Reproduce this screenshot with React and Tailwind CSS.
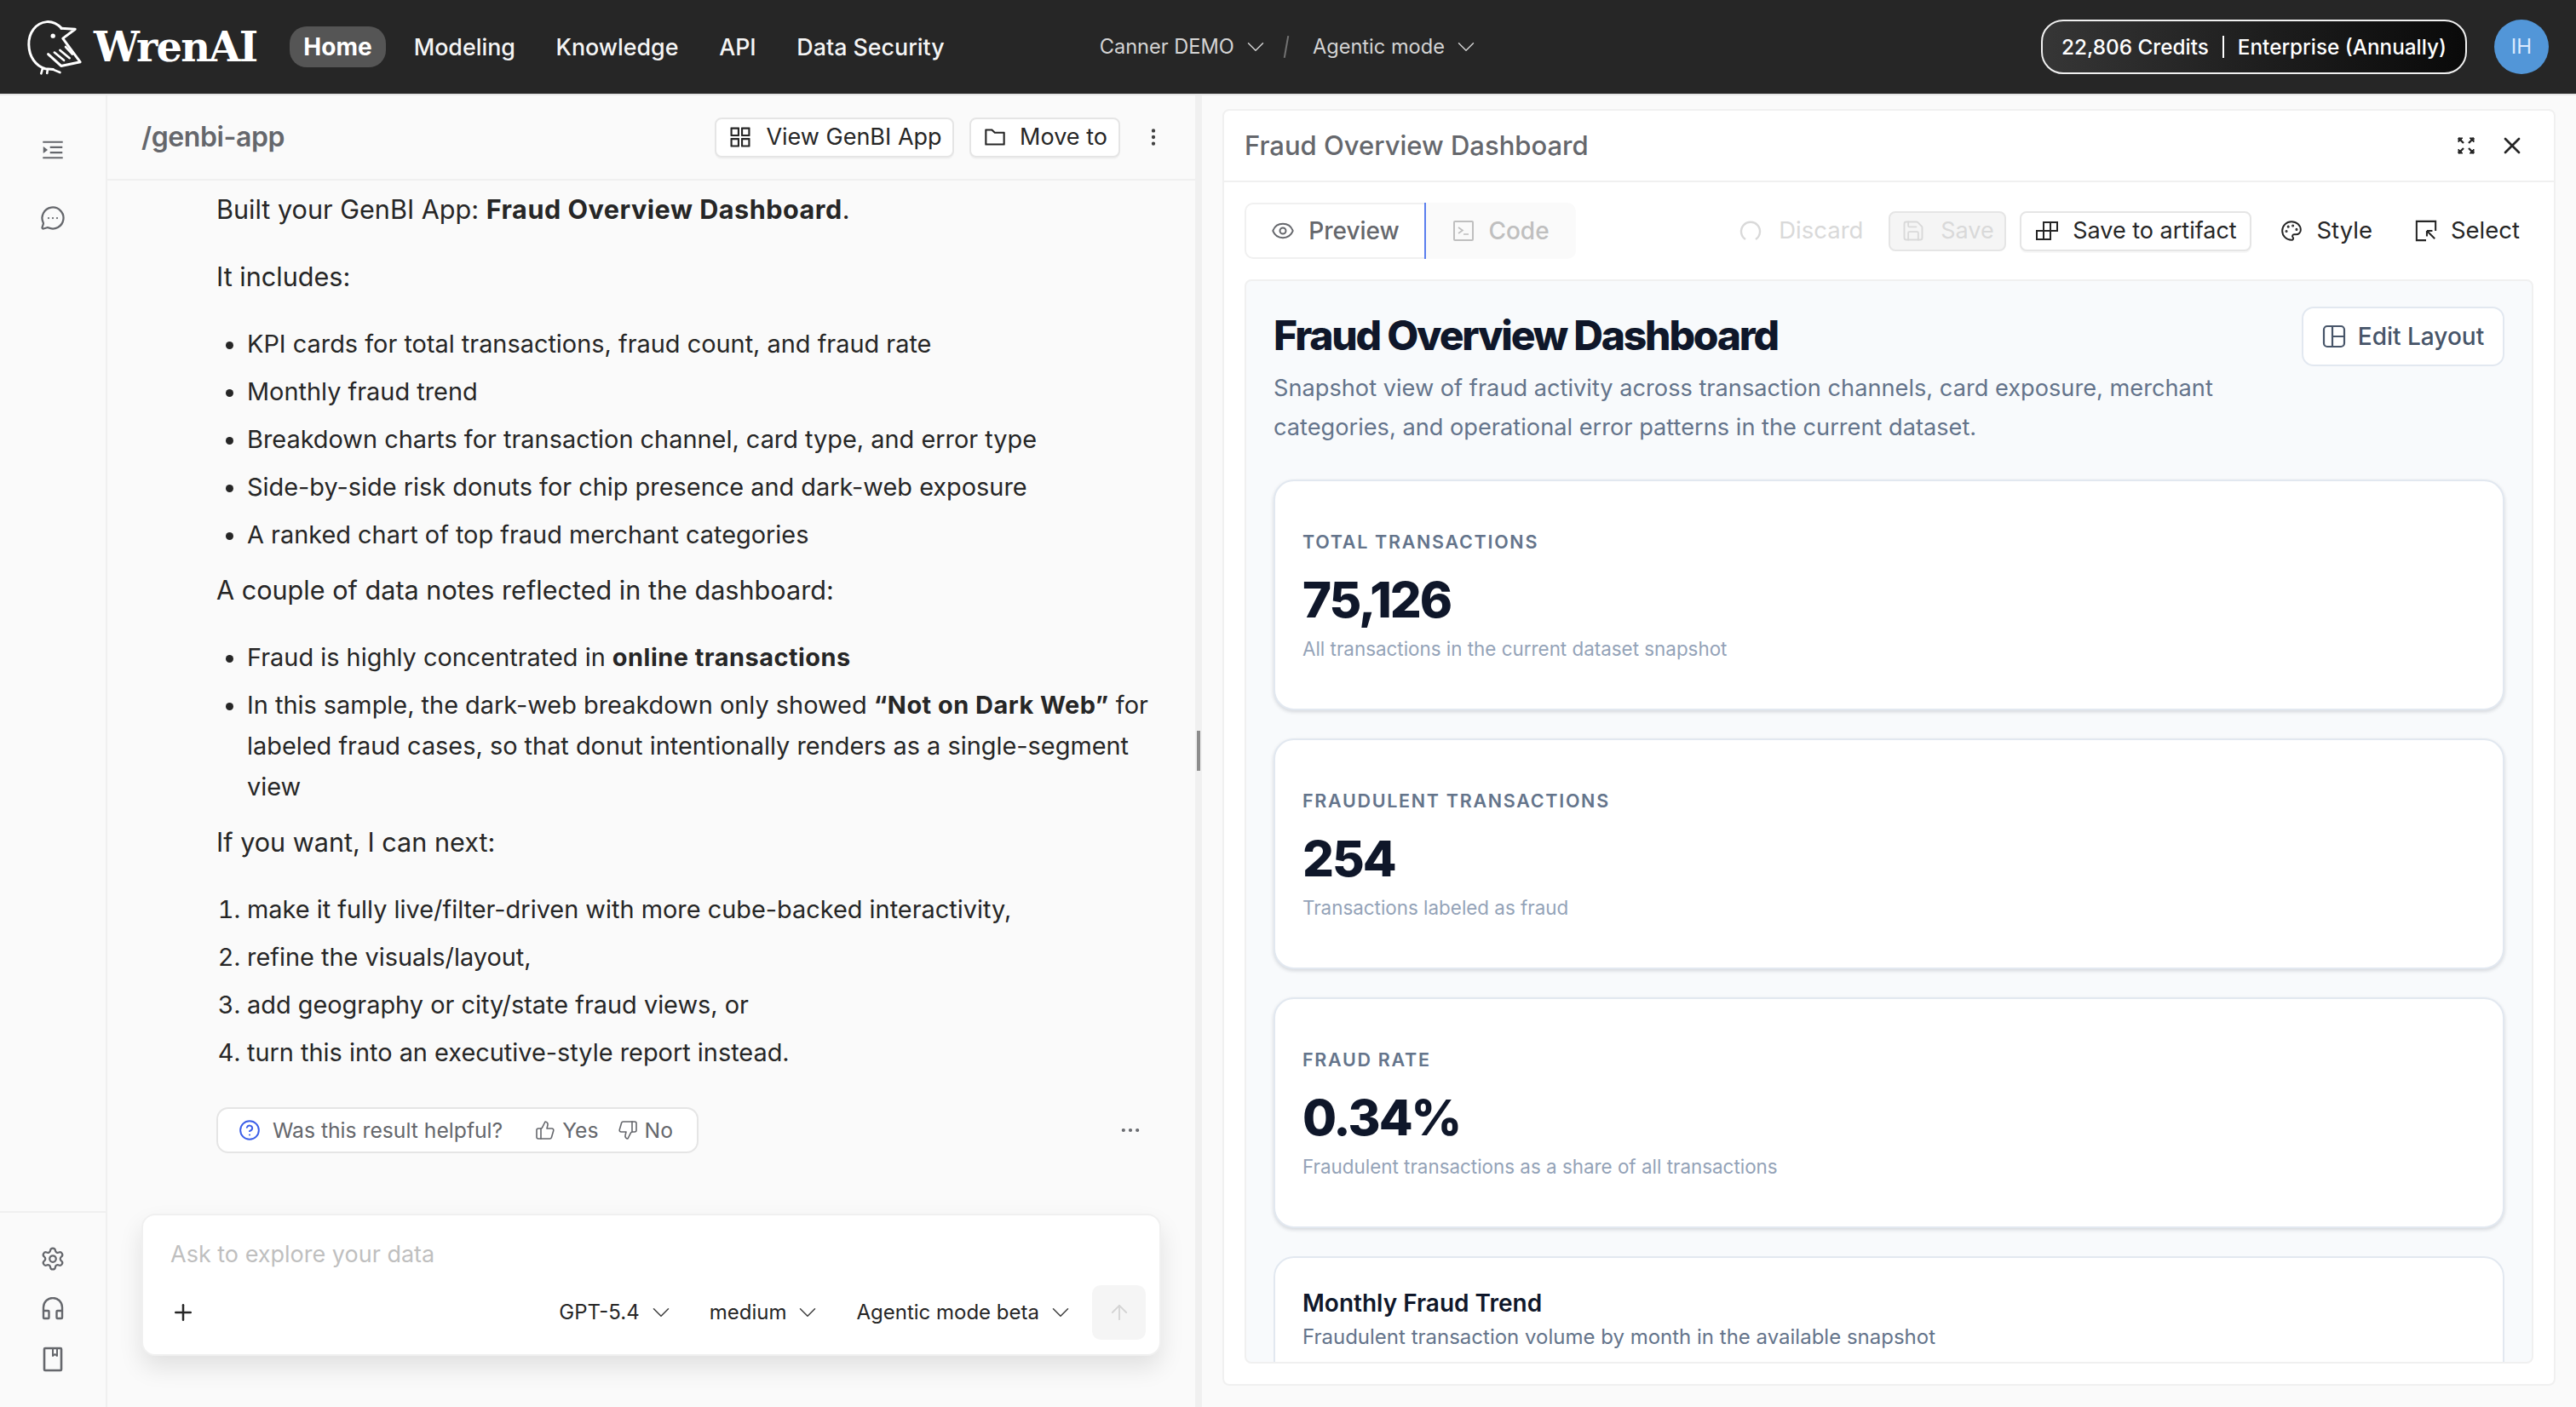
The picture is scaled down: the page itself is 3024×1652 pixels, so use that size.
import React from "react";
import { ChevronDown, MessageCircleMore, Settings, Eye, X, Palette, Plus, ArrowUp, ThumbsUp, ThumbsDown, CircleHelp, MoreHorizontal, MoreVertical, Save } from "lucide-react";
import { AiOutlineAppstore, AiOutlineFolder, AiOutlineMenuUnfold } from "react-icons/ai";

const Logo = () => (
  <svg viewBox="90 60 205 200" className="w-[68px] h-[66px] shrink-0" fill="none" stroke="#fff" strokeWidth="9" strokeLinecap="round" strokeLinejoin="round">
    <path d="M218 94 C200 76 180 70 165 71 C125 74 100 112 101 152 C102 195 125 228 160 238 L188 240" />
    <path d="M216 94 L266 97 L222 130 L284 214 L216 228 L170 186" />
    <path d="M192 180 L226 208 M212 172 L246 200 M232 160 L256 186" strokeWidth="8" />
    <path d="M150 238 L145 255 M168 240 L166 254 M185 240 L212 251" strokeWidth="8" />
    <circle cx="187" cy="121" r="8" fill="#fff" stroke="none" />
  </svg>
);
const Headset = ({ className }) => (
  <svg viewBox="0 0 26 28" className={className} fill="none" stroke="currentColor" strokeWidth="2.4" strokeLinejoin="round">
    <path d="M2 17 V12 A11 11 0 0 1 24 12 V17" />
    <rect x="2" y="16" width="6.5" height="9" rx="1" />
    <rect x="17.5" y="16" width="6.5" height="9" rx="1" />
  </svg>
);
const Book = ({ className }) => (
  <svg viewBox="0 0 24 30" className={className} fill="none" stroke="currentColor" strokeWidth="2.6" strokeLinejoin="round">
    <rect x="2" y="2" width="20" height="26" rx="1" />
    <path d="M12 2 V11 L14.5 9 L17 11 V2" strokeWidth="2" />
  </svg>
);
const Collapse = ({ className }) => (
  <svg viewBox="0 0 24 24" className={className} fill="none" stroke="currentColor" strokeWidth="2.4">
    <path d="M3 3 L9 9 M21 3 L15 9 M3 21 L9 15 M21 21 L15 15" />
    <path d="M3 3 H8 L3 8 Z M21 3 H16 L21 8 Z M3 21 H8 L3 16 Z M21 21 H16 L21 16 Z" fill="currentColor" strokeWidth="1" />
  </svg>
);
const CodeBox = ({ className }) => (
  <svg viewBox="0 0 26 26" className={className} fill="none" stroke="currentColor" strokeWidth="2">
    <rect x="2" y="2" width="22" height="22" rx="1" />
    <path d="M7 9 L12 12.5 L7 16 M13 17 H19" strokeWidth="1.6" />
  </svg>
);
const Artifact = ({ className }) => (
  <svg viewBox="0 0 28 24" className={className} fill="none" stroke="currentColor" strokeWidth="2">
    <path d="M2 12 H18 V22 H2 Z M10 12 V22 M10 12 V2 H26 V12 H18 V2" />
  </svg>
);
const SelectIcon = ({ className }) => (
  <svg viewBox="0 0 28 28" className={className} fill="none" stroke="currentColor" strokeWidth="2.2">
    <path d="M14 26 H2 V2 H26 V14" />
    <path d="M15 14 L25 24 M15 14 V21 M15 14 H22" />
  </svg>
);
const Spin = ({ className }) => (
  <svg viewBox="0 0 26 26" className={className} fill="none" stroke="currentColor" strokeWidth="2.4">
    <path d="M7 23 A11 11 0 1 1 19 23" />
  </svg>
);
const LayoutIcon = ({ className }) => (
  <svg viewBox="0 0 28 28" className={className} fill="none" stroke="currentColor" strokeWidth="2.2" strokeLinejoin="round">
    <rect x="2" y="2" width="24" height="24" rx="4" />
    <path d="M12 2 V26 M12 14 H26" />
  </svg>
);

const Card = ({ label, value, note }) => (
  <div className="h-[271px] shrink-0 rounded-[24px] border-2 border-[#e2e8f0] bg-white px-[32px] pt-[57px] shadow-[0_2px_4px_rgba(15,23,42,0.15)]">
    <div className="text-[21.5px] leading-[28px] font-semibold tracking-[1.7px] text-[#64748b]">{label}</div>
    <div className="mt-[18px] text-[58px] leading-[72px] font-extrabold tracking-[-2px] text-[#0f172a]">{value}</div>
    <div className="mt-[6px] text-[22.4px] leading-[32px] text-[#94a3b8]">{note}</div>
  </div>
);

const Nav = ({ children }) => <span className="text-[26.8px] font-medium text-[#f5f5f5]">{children}</span>;

const Select = ({ children, className = "" }) => (
  <div className={`flex items-center gap-[8px] text-[24px] text-[#262626] ${className}`}>
    <span>{children}</span>
    <ChevronDown className="w-[34px] h-[34px] -mx-[0px] text-[#404040]" strokeWidth={1.1} />
  </div>
);

export default function App() {
  return (
    <div className="w-[3024px] h-[1652px] overflow-hidden flex flex-col bg-[#fafafa] font-['Inter',sans-serif] text-[#262626]">
      <header className="h-[112px] shrink-0 flex items-center bg-[#262626] border-b-2 border-[#e5e5e5] pl-[30px] pr-[32px]">
        <Logo />
        <span className="ml-[12px] w-[190px] font-['DejaVu_Serif',serif] font-bold text-[48px] tracking-[-1.8px] leading-none text-white">WrenAI</span>
        <div className="ml-[40px] flex items-center gap-[47.7px]">
          <span className="-mr-[15px] h-[48px] w-[113px] flex items-center justify-center rounded-[20px] bg-[#555555] text-[28px] font-bold text-white">Home</span>
          <Nav>Modeling</Nav>
          <Nav>Knowledge</Nav>
          <Nav>API</Nav>
          <Nav>Data Security</Nav>
        </div>
        <div className="ml-[182px] flex items-center text-[23.6px] text-[#d4d4d4]">
          <span>Canner DEMO</span>
          <ChevronDown className="ml-[8px] w-[34px] h-[34px]" strokeWidth={1} />
          <span className="ml-[18px] mr-[30px] h-[26px] w-[2px] rotate-[10deg] bg-[#737373]" />
          <span>Agentic mode</span>
          <ChevronDown className="ml-[8px] w-[34px] h-[34px]" strokeWidth={1} />
        </div>
        <div className="ml-auto flex items-center h-[64px] w-[500px] justify-center gap-[16px] rounded-[26px] border-2 border-[#f0f0f0] bg-gradient-to-r from-[#363636] to-[#0a0a0a] text-[24.3px] font-medium text-white">
          <span>22,806 Credits</span>
          <span className="h-[26px] w-[2px] bg-white" />
          <span>Enterprise (Annually)</span>
        </div>
        <div className="ml-[32px] w-[64px] h-[64px] rounded-full bg-[#5296d8] flex items-center justify-center text-[24px] text-[#dbeafe]">IH</div>
      </header>

      <div className="flex-1 min-h-0 flex">
        <aside className="w-[126px] shrink-0 border-r-2 border-[#f0f0f0] flex flex-col text-[#65676c]">
          <div className="flex-1 flex flex-col items-center pt-[49px] gap-[50px]">
            <AiOutlineMenuUnfold className="w-[30px] h-[30px]" />
            <MessageCircleMore className="w-[30px] h-[30px]" strokeWidth={1.8} />
          </div>
          <div className="h-[230px] shrink-0 border-t-2 border-[#f0f0f0] flex flex-col items-center pt-[39px] gap-[30px]">
            <Settings className="w-[30px] h-[30px]" strokeWidth={1.8} />
            <Headset className="w-[26px] h-[28px]" />
            <Book className="w-[24px] h-[30px]" />
          </div>
        </aside>

        <main className="w-[1277px] shrink-0 flex flex-col relative">
          <div className="h-[100px] shrink-0 border-b-2 border-[#f0f0f0] flex items-center pl-[40px] pr-[36px]">
            <span className="text-[32px] font-semibold text-[#65676c] tracking-[-0.4px]">/genbi-app</span>
            <div className="ml-auto flex items-center gap-[18px]">
              <div className="h-[47px] w-[281px] flex items-center justify-center gap-[14px] rounded-[8px] border-2 border-[#e5e5e5] bg-white text-[27px] shadow-[0_2px_0_rgba(0,0,0,0.03)]">
                <AiOutlineAppstore className="w-[32px] h-[32px]" />View GenBI App
              </div>
              <div className="h-[47px] w-[177px] flex items-center justify-center gap-[14px] rounded-[8px] border-2 border-[#e5e5e5] bg-white text-[27px] shadow-[0_2px_0_rgba(0,0,0,0.03)]">
                <AiOutlineFolder className="w-[30px] h-[30px]" />Move to
              </div>
              <MoreVertical className="ml-[8px] w-[26px] h-[26px] text-[#404040]" strokeWidth={2} />
            </div>
          </div>

          <div className="flex-1 min-h-0 pl-[128px] pr-[40px] pt-[10px] text-[30.6px] leading-[48px]">
            <p className="mb-[31px]">Built your GenBI App: <b className="font-bold tracking-[0.5px]">Fraud Overview Dashboard</b>.</p>
            <p className="mb-[31px]">It includes:</p>
            <ul className="list-disc pl-[36px] mb-[17px] flex flex-col gap-[8px] text-[28.9px]">
              <li>KPI cards for total transactions, fraud count, and fraud rate</li>
              <li>Monthly fraud trend</li>
              <li>Breakdown charts for transaction channel, card type, and error type</li>
              <li>Side-by-side risk donuts for chip presence and dark-web exposure</li>
              <li>A ranked chart of top fraud merchant categories</li>
            </ul>
            <p className="mb-[31px]">A couple of data notes reflected in the dashboard:</p>
            <ul className="list-disc pl-[36px] mb-[17px] flex flex-col gap-[8px] text-[28.9px]">
              <li>Fraud is highly concentrated in <b className="font-bold tracking-[0.5px]">online transactions</b></li>
              <li>In this sample, the dark-web breakdown only showed <b className="font-bold tracking-[0.5px]">“Not on Dark Web”</b> for labeled fraud cases, so that donut intentionally renders as a single-segment view</li>
            </ul>
            <p className="mb-[31px]">If you want, I can next:</p>
            <ol className="list-decimal pl-[36px] flex flex-col gap-[8px] text-[28.9px]">
              <li>make it fully live/filter-driven with more cube-backed interactivity,</li>
              <li>refine the visuals/layout,</li>
              <li>add geography or city/state fraud views, or</li>
              <li>turn this into an executive-style report instead.</li>
            </ol>
            <div className="mt-[40px] flex items-center justify-between pr-[22px]">
              <div className="h-[54px] w-[566px] flex items-center rounded-[14px] border-2 border-[#e5e5e5] bg-white pl-[24px] text-[24.7px] leading-none text-[#65676c]">
                <CircleHelp className="w-[26px] h-[26px] text-[#3b5ee8] mr-[14px]" strokeWidth={1.8} />
                <span>Was this result helpful?</span>
                <ThumbsUp className="ml-[38px] mr-[8px] w-[24px] h-[24px]" strokeWidth={1.6} />
                <span>Yes</span>
                <ThumbsDown className="ml-[22px] mr-[8px] w-[24px] h-[24px]" strokeWidth={1.6} />
                <span>No</span>
              </div>
              <MoreHorizontal className="w-[28px] h-[28px] text-[#65676c]" strokeWidth={1.6} />
            </div>
          </div>

          <div className="h-[167px] shrink-0 ml-[40px] mr-[40px] mb-[60px] rounded-[16px] border-2 border-[#f0f0f0] bg-white shadow-[0_14px_28px_rgba(0,0,0,0.1)] flex flex-col px-[32px] pt-[28px]">
            <div className="text-[27px] leading-[36px] text-[#bfbfbf]">Ask to explore your data</div>
            <div className="mt-[18px] flex items-center -mr-[16px]">
              <Plus className="w-[30px] h-[30px] text-[#262626]" strokeWidth={2} />
              <div className="ml-auto flex items-center gap-[40px]">
                <Select>GPT-5.4</Select>
                <Select>medium</Select>
                <Select>Agentic mode beta</Select>
              </div>
              <div className="ml-[20px] w-[63px] h-[64px] rounded-[10px] bg-[#f5f5f5] flex items-center justify-center">
                <ArrowUp className="w-[28px] h-[28px] text-[#d4d4d4]" strokeWidth={1.6} />
              </div>
            </div>
          </div>
        </main>

        <div className="w-[8px] shrink-0 bg-[#f0f0f0] relative">
          <div className="absolute left-[2px] top-[746px] w-[4px] h-[47px] bg-[#8c8c8c]" />
        </div>

        <div className="flex-1 min-w-0 pl-[24px] pr-[24px] pt-[16px] pb-[25px]">
          <section className="h-full rounded-[8px] border-2 border-[#f0f0f0] bg-white flex flex-col">
            <div className="h-[84px] shrink-0 border-b-2 border-[#f0f0f0] flex items-center pl-[24px] pr-[33px]">
              <span className="text-[31px] font-medium text-[#65676c]">Fraud Overview Dashboard</span>
              <Collapse className="ml-auto w-[24px] h-[24px] text-[#262626]" />
              <X className="ml-[26px] w-[32px] h-[32px] text-[#262626]" strokeWidth={2} />
            </div>
            <div className="h-[114px] shrink-0 flex items-center pl-[24px] pr-[40px]">
              <div className="flex h-[66px]">
                <div className="w-[211px] flex items-center justify-center gap-[16px] rounded-l-[10px] border-2 border-r-0 border-[#f0f0f0] bg-white text-[28px] font-medium text-[#65676c]">
                  <Eye className="w-[28px] h-[28px]" strokeWidth={1.7} />Preview
                </div>
                <div className="w-[2px] bg-[#5b7fee]" />
                <div className="w-[176px] flex items-center justify-center gap-[16px] rounded-r-[10px] bg-[#fafafa] text-[28px] font-medium text-[#bfbfbf]">
                  <CodeBox className="w-[26px] h-[26px]" />Code
                </div>
              </div>
              <div className="ml-auto flex items-center text-[27px]">
                <div className="flex items-center gap-[20px] text-[#d9d9d9] text-[27.5px]">
                  <Spin className="w-[26px] h-[26px]" />Discard
                </div>
                <div className="ml-[30px] h-[47px] w-[138px] flex items-center justify-center gap-[18px] rounded-[8px] border-2 border-[#e5e5e5] bg-[#f5f5f5] text-[#d9d9d9]">
                  <Save className="w-[28px] h-[28px]" strokeWidth={1.6} />Save
                </div>
                <div className="ml-[16px] h-[47px] w-[272px] flex items-center justify-center gap-[16px] rounded-[8px] border-2 border-[#e5e5e5] bg-white text-[#262626] shadow-[0_2px_0_rgba(0,0,0,0.03)]">
                  <Artifact className="w-[28px] h-[24px]" />Save to artifact
                </div>
                <div className="ml-[34px] flex items-center gap-[16px] text-[#262626] text-[27.5px]">
                  <Palette className="w-[26px] h-[26px]" strokeWidth={1.8} />Style
                </div>
                <div className="ml-[50px] flex items-center gap-[16px] text-[#262626] text-[27.5px]">
                  <SelectIcon className="w-[26px] h-[26px]" />Select
                </div>
              </div>
            </div>
            <div className="mx-[24px] mb-[24px] flex-1 min-h-0 overflow-hidden rounded-[8px] border-2 border-[#f0f0f0] bg-[#f8fafc] px-[32px] pt-[30px]">
              <div className="flex items-start justify-between">
                <div className="w-[1160px]">
                  <h1 className="text-[48px] leading-[68px] font-extrabold tracking-[-2.2px] text-[#0f172a]">Fraud Overview Dashboard</h1>
                  <p className="mt-[5px] text-[27.2px] leading-[46px] text-[#64748b]">Snapshot view of fraud activity across transaction channels, card exposure, merchant categories, and operational error patterns in the current dataset.</p>
                </div>
                <div className="h-[70px] w-[238px] flex items-center justify-center gap-[14px] rounded-[14px] border-2 border-[#e2e8f0] bg-white text-[28px] font-medium text-[#475569]">
                  <LayoutIcon className="w-[28px] h-[28px]" />Edit Layout
                </div>
              </div>
              <div className="mt-[38px] flex flex-col gap-[33px]">
                <Card label="TOTAL TRANSACTIONS" value="75,126" note="All transactions in the current dataset snapshot" />
                <Card label="FRAUDULENT TRANSACTIONS" value="254" note="Transactions labeled as fraud" />
                <Card label="FRAUD RATE" value="0.34%" note="Fraudulent transactions as a share of all transactions" />
                <div className="h-[300px] shrink-0 rounded-[24px] border-2 border-[#e2e8f0] bg-white px-[32px] pt-[35px]">
                  <div className="text-[28px] leading-[36px] font-semibold text-[#0f172a]">Monthly Fraud Trend</div>
                  <div className="mt-[4px] text-[24px] leading-[36px] text-[#64748b]">Fraudulent transaction volume by month in the available snapshot</div>
                </div>
              </div>
            </div>
          </section>
        </div>
      </div>
    </div>
  );
}
